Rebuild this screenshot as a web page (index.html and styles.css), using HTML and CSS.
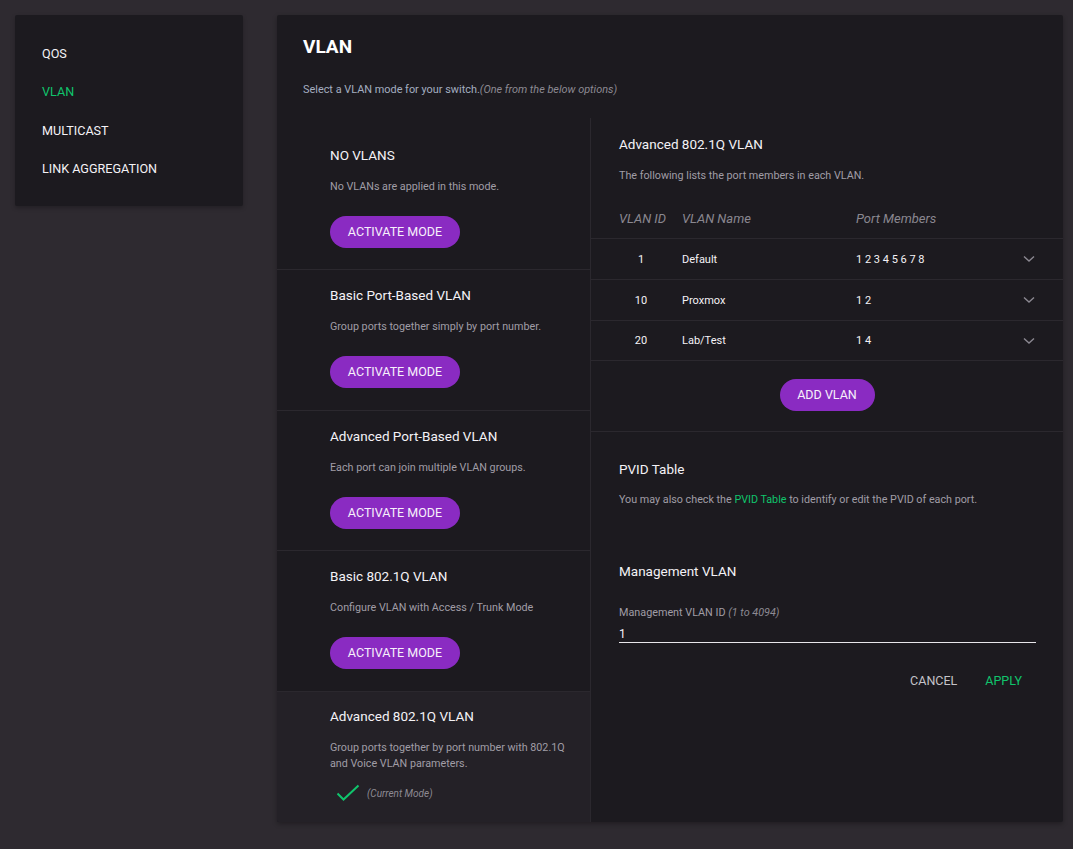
FILE: index.html
```html
<!DOCTYPE html>
<html>
<head>
<meta charset="utf-8">
<link rel="stylesheet" href="styles.css">
</head>
<body>
<div class="layout">
  <nav class="sidebar">
    <a class="nav-item">QOS</a>
    <a class="nav-item active">VLAN</a>
    <a class="nav-item">MULTICAST</a>
    <a class="nav-item">LINK AGGREGATION</a>
  </nav>
  <main class="card">
    <header class="card-head">
      <h1>VLAN</h1>
      <p class="subtitle">Select a VLAN mode for your switch.<em>(One from the below options)</em></p>
    </header>
    <div class="card-body">
      <section class="modes">
        <div class="mode">
          <h3 class="mode-title">NO VLANS</h3>
          <p class="mode-desc">No VLANs are applied in this mode.</p>
          <button class="pill">ACTIVATE MODE</button>
        </div>
        <div class="mode">
          <h3 class="mode-title">Basic Port-Based VLAN</h3>
          <p class="mode-desc">Group ports together simply by port number.</p>
          <button class="pill">ACTIVATE MODE</button>
        </div>
        <div class="mode">
          <h3 class="mode-title">Advanced Port-Based VLAN</h3>
          <p class="mode-desc">Each port can join multiple VLAN groups.</p>
          <button class="pill">ACTIVATE MODE</button>
        </div>
        <div class="mode">
          <h3 class="mode-title">Basic 802.1Q VLAN</h3>
          <p class="mode-desc">Configure VLAN with Access / Trunk Mode</p>
          <button class="pill">ACTIVATE MODE</button>
        </div>
        <div class="mode current">
          <h3 class="mode-title">Advanced 802.1Q VLAN</h3>
          <p class="mode-desc">Group ports together by port number with 802.1Q and Voice VLAN parameters.</p>
          <div class="current-mark">
            <svg width="24" height="18" viewBox="0 0 24 18"><path d="M1.5 9.5 L7.5 15.5 L22.5 1.5" fill="none" stroke="#10c46c" stroke-width="2"/></svg>
            <span>(Current Mode)</span>
          </div>
        </div>
      </section>
      <section class="details">
        <div class="block">
          <h3 class="sec-title">Advanced 802.1Q VLAN</h3>
          <p class="sec-desc">The following lists the port members in each VLAN.</p>
        </div>
        <div class="vtable">
          <div class="vrow vhead">
            <span class="c-id">VLAN ID</span>
            <span class="c-name">VLAN Name</span>
            <span class="c-ports">Port Members</span>
            <span></span>
          </div>
          <div class="vrow">
            <span class="c-id">1</span>
            <span class="c-name">Default</span>
            <span class="c-ports">1 2 3 4 5 6 7 8</span>
            <svg class="chev" width="12" height="8" viewBox="0 0 12 8"><path d="M1 1.5 L6 6 L11 1.5" fill="none" stroke="#8b8891" stroke-width="1.4"/></svg>
          </div>
          <div class="vrow">
            <span class="c-id">10</span>
            <span class="c-name">Proxmox</span>
            <span class="c-ports">1 2</span>
            <svg class="chev" width="12" height="8" viewBox="0 0 12 8"><path d="M1 1.5 L6 6 L11 1.5" fill="none" stroke="#8b8891" stroke-width="1.4"/></svg>
          </div>
          <div class="vrow">
            <span class="c-id">20</span>
            <span class="c-name">Lab/Test</span>
            <span class="c-ports">1 4</span>
            <svg class="chev" width="12" height="8" viewBox="0 0 12 8"><path d="M1 1.5 L6 6 L11 1.5" fill="none" stroke="#8b8891" stroke-width="1.4"/></svg>
          </div>
        </div>
        <div class="add-wrap">
          <button class="pill add">ADD VLAN</button>
        </div>
        <div class="block pvid">
          <h3 class="sec-title">PVID Table</h3>
          <p class="sec-desc">You may also check the <a class="link">PVID Table</a> to identify or edit the PVID of each port.</p>
          <h3 class="sec-title mgmt">Management VLAN</h3>
          <label class="field-label">Management VLAN ID <em>(1 to 4094)</em></label>
          <div class="field">1</div>
          <div class="actions">
            <button class="text-btn cancel">CANCEL</button>
            <button class="text-btn apply">APPLY</button>
          </div>
        </div>
      </section>
    </div>
  </main>
</div>
</body>
</html>
```
FILE: styles.css
```css
* { box-sizing: border-box; }
html, body { margin: 0; padding: 0; }
body {
  background: #2e2a30;
  font-family: Roboto, "Liberation Sans", sans-serif;
  color: #f1eff3;
  width: 1073px;
  height: 849px;
  overflow: hidden;
}
.layout {
  display: flex;
  align-items: flex-start;
  padding: 15px 10px 0 15px;
  gap: 34px;
}
.sidebar {
  width: 228px;
  background: #1c1a1f;
  border-radius: 2px;
  padding: 20px 0 17px 27px;
  display: flex;
  flex-direction: column;
  box-shadow: 0 2px 4px rgba(0,0,0,0.25);
}
.nav-item {
  font-size: 12.6px;
  line-height: 38.4px;
  height: 38.4px;
  color: #f4f2f6;
}
.nav-item.active { color: #10c46c; }

.card {
  width: 786px;
  height: 807px;
  background: #1c1a1f;
  border-radius: 2px;
  box-shadow: 0 2px 5px rgba(0,0,0,0.3);
  display: flex;
  flex-direction: column;
  overflow: hidden;
}
.card-head { padding: 20px 26px 0 26px; }
.card-head h1 {
  margin: 0;
  font-size: 19px;
  line-height: 24px;
  font-weight: 700;
  color: #ffffff;
}
.subtitle {
  margin: 23px 0 20px;
  font-size: 10.9px;
  line-height: 16px;
  color: #a4aec0;
}
.subtitle em { color: #8d8a93; }

.card-body {
  flex: 1;
  display: flex;
}
.modes {
  width: 314px;
  border-right: 1px solid #2b282e;
  padding-top: 12px;
  display: flex;
  flex-direction: column;
}
.mode {
  height: 140.4px;
  flex: none;
  padding: 16px 0 0 53px;
  border-bottom: 1px solid #2b282e;
}
.mode.current {
  height: auto;
  background: #242127;
  border-bottom: none;
  flex: 1;
  padding-top: 15.5px;
}
.mode-title {
  margin: 0;
  font-size: 13.5px;
  line-height: 18px;
  font-weight: 400;
  color: #f4f2f6;
}
.mode-desc {
  margin: 15px 0 0;
  font-size: 10.75px;
  line-height: 16px;
  color: #a09da6;
  width: 250px;
}
.pill {
  display: block;
  margin-top: 21px;
  height: 32px;
  padding: 0 18px;
  border: none;
  border-radius: 16px;
  background: #8a2bc2;
  color: #f7f0fb;
  font-family: Roboto, "Liberation Sans", sans-serif;
  font-size: 12.5px;
  line-height: 32px;
  cursor: pointer;
}
.mode .pill { width: 130px; padding: 0; }
.current-mark {
  display: flex;
  align-items: center;
  gap: 7px;
  margin-top: 12px;
  padding-left: 6px;
}
.current-mark span {
  font-size: 10px;
  font-style: italic;
  color: #8d8a93;
}

.details {
  flex: 1;
  display: flex;
  flex-direction: column;
}
.block { padding: 17px 27px 0 28px; }
.sec-title {
  margin: 0;
  font-size: 13.5px;
  line-height: 18px;
  font-weight: 400;
  color: #f4f2f6;
}
.sec-desc {
  margin: 15px 0 0;
  font-size: 10.75px;
  line-height: 16px;
  color: #a09da6;
}
.link { color: #10c46c; }

.vtable { margin-top: 15px; }
.vrow {
  display: grid;
  grid-template-columns: 44px 174px 1fr 12px;
  column-gap: 0;
  align-items: center;
  height: 40.8px;
  padding: 1px 28px 0 28px;
  border-bottom: 1px solid #2b282e;
  font-size: 11px;
  color: #f4f2f6;
}
.vrow .c-name { margin-left: 19px; }
.vrow .c-id { text-align: center; }
.vrow .c-ports { margin-left: 19px; }
.vhead {
  height: 40px;
  padding-top: 0;
  font-size: 13px;
  font-style: italic;
  color: #8a8790;
}
.vhead .c-id { text-align: left; white-space: nowrap; }
.chev { display: block; }

.add-wrap {
  display: flex;
  justify-content: center;
  padding: 18px 0 20px;
  border-bottom: 1px solid #2b282e;
}
.add-wrap .pill { margin-top: 0; width: 95px; padding: 0; }

.pvid { padding-top: 28px; }
.pvid .sec-desc { margin-top: 14px; }
.mgmt { margin-top: 54px; }
.field-label {
  display: block;
  margin-top: 25px;
  font-size: 10.8px;
  line-height: 16px;
  color: #a09da6;
}
.field-label em { color: #8d8a93; }
.field {
  height: 22px;
  padding-top: 5px;
  font-size: 12px;
  line-height: 16px;
  color: #f4f2f6;
  border-bottom: 1.5px solid #e8e6ea;
}
.actions {
  display: flex;
  justify-content: flex-end;
  margin-top: 28px;
}
.text-btn {
  background: none;
  border: none;
  font-family: Roboto, "Liberation Sans", sans-serif;
  font-size: 12.5px;
  line-height: 20px;
  padding: 0 14px;
  cursor: pointer;
}
.cancel { color: #c5c3c9; }
.apply { color: #10c46c; }
```
